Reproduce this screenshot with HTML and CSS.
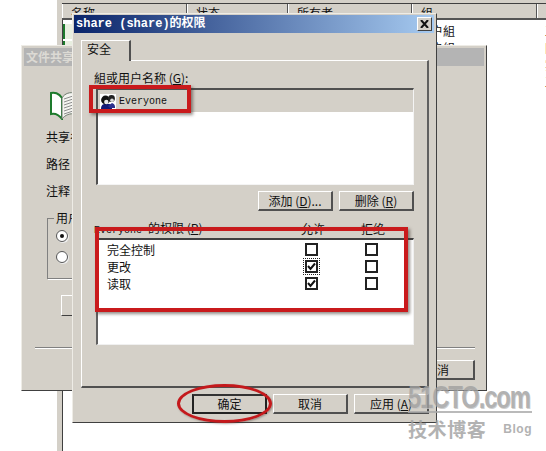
FILE: index.html
```html
<!DOCTYPE html>
<html lang="zh">
<head>
<meta charset="utf-8">
<title>share (share)的权限</title>
<link rel="stylesheet" href="styles.css">
</head>
<body>
<div class="desktop">

  <div class="list-window">
    <div class="list-head">
      <div class="col c1">名称</div><div class="col c2">状态</div><div class="col c3">所有者</div><div class="col c4">组</div><div class="col c5">描述</div>
    </div>
    <div class="list-row"><div class="c1 row-icon"></div><div class="c2"></div><div class="c3"></div><div class="c4 cell">用户組</div><div class="c5 cell">工作</div></div>
    <div class="list-row"><div class="c1 row-icon"></div><div class="c2"></div><div class="c3"></div><div class="c4 cell">用户組</div><div class="c5 cell">同步</div></div>
    <div class="list-row"><div class="c1"></div><div class="c2"></div><div class="c3"></div><div class="c4"></div><div class="c5 cell">实现</div></div>
    <div class="list-row"><div class="c1"></div><div class="c2"></div><div class="c3"></div><div class="c4"></div><div class="c5 cell">工具</div></div>
  </div>

  <div class="window back">
    <div class="back-title">文件共享</div>
    <div class="back-body">
      <svg class="book" viewBox="0 0 27 30" width="27" height="30">
        <path d="M13 8C10 3 5 2 2 3V24C6 23 10 25 13 29Z" fill="#fff" stroke="#1d7a2c" stroke-width="2"/>
        <path d="M13 8C16 3 21 2 26 3V24C21 23 16 25 13 29Z" fill="#f4f4f0" stroke="#6d7a6d" stroke-width="1"/>
        <path d="M15 9L24 6M15 12L24 9M15 15L24 12M15 18L24 15M15 21L24 18M15 24L24 21" stroke="#8d8d8d" stroke-width="1"/>
      </svg>
      <div class="back-label l1">共享名</div>
      <div class="back-label">路径</div>
      <div class="back-label">注释</div>
      <div class="group">
        <span class="legend">用户</span>
        <div class="radio on"></div>
        <div class="radio"></div>
      </div>
      <div class="back-btn-small"></div>
      <div class="back-sep"></div>
      <div class="back-foot"><div class="btn">取消</div></div>
    </div>
  </div>

  <div class="window dialog">
    <div class="titlebar">
      <span class="title-text">share (share)的权限</span>
      <div class="close"><svg viewBox="0 0 9 8" width="9" height="8"><path d="M1 0L8 8M8 0L1 8" stroke="#111" stroke-width="2"/></svg></div>
    </div>
    <div class="tab">安全</div>
    <div class="pane">
      <div class="label">組或用户名称 (<u>G</u>):</div>
      <div class="userlist">
        <div class="user-row">
          <svg class="people" viewBox="0 0 16 16" width="16" height="16">
            <rect width="16" height="16" fill="#fff"/>
            <path d="M1 15C1 11 3 10 5 10H9C11 10 12 12 12 15Z" fill="#141a78"/>
            <path d="M8 12L12 9C15 10 15 12 15 14H10Z" fill="#2b2f8c"/>
            <circle cx="5.5" cy="6" r="4.4" fill="#111"/>
            <circle cx="6.3" cy="8" r="2.2" fill="#e9e9e9"/>
            <circle cx="11.5" cy="4.5" r="3.4" fill="#222"/>
            <circle cx="12" cy="6.3" r="1.8" fill="#ddd"/>
          </svg>
          <span class="mono">Everyone</span>
        </div>
      </div>
      <div class="btn-row">
        <div class="btn">添加 (<u>D</u>)...</div>
        <div class="btn">删除 (<u>R</u>)</div>
      </div>
      <div class="perm-head">
        <span class="perm-title"><span class="mono perm-who">Everyone</span>的权限 (<u>P</u>)</span>
        <span class="perm-col">允许</span>
        <span class="perm-col">拒绝</span>
      </div>
      <div class="permlist">
        <div class="perm-row">
          <span class="perm-name">完全控制</span>
          <span class="check-cell"><span class="check"></span></span>
          <span class="check-cell"><span class="check"></span></span>
        </div>
        <div class="perm-row">
          <span class="perm-name">更改</span>
          <span class="check-cell"><span class="check focus"><svg viewBox="0 0 9 9" width="9" height="9"><path d="M1 4L3.5 7L8 1.5" fill="none" stroke="#111" stroke-width="2"/></svg></span></span>
          <span class="check-cell"><span class="check"></span></span>
        </div>
        <div class="perm-row">
          <span class="perm-name">读取</span>
          <span class="check-cell"><span class="check"><svg viewBox="0 0 9 9" width="9" height="9"><path d="M1 4L3.5 7L8 1.5" fill="none" stroke="#111" stroke-width="2"/></svg></span></span>
          <span class="check-cell"><span class="check"></span></span>
        </div>
      </div>
    </div>
    <div class="foot">
      <div class="btn default">确定</div>
      <div class="btn">取消</div>
      <div class="btn">应用 (<u>A</u>)</div>
    </div>
  </div>

  <div class="mark mark-user"></div>
  <div class="mark mark-perm"></div>
  <div class="mark mark-ok"></div>

  <div class="watermark">
    <div class="wm-logo">51CTO.com</div>
    <div class="wm-line"></div>
    <div class="wm-sub"><span class="wm-cn">技术博客</span><span class="wm-blog">Blog</span></div>
  </div>
</div>
</body>
</html>
```
FILE: styles.css
```css
* { box-sizing: border-box; }
html, body { margin: 0; padding: 0; background: #fff; }
body { font-family: "Noto Sans CJK SC", "Liberation Sans", sans-serif; font-size: 12px; line-height: 14px; color: #111; }
u { text-decoration: underline; }
.mono { font-family: "Liberation Mono", "DejaVu Sans Mono", monospace; font-size: 10px; }

.desktop { position: relative; width: 546px; height: 451px; overflow: hidden; background: #fff; }

/* background list window */
.list-window { position: absolute; left: 57px; top: 0; right: 0; bottom: 0; border-left: 5px solid #d4d0c8; box-shadow: inset 1px 0 0 #404040; background: #fff; padding-top: 3px; overflow: hidden; }
.list-head { display: flex; height: 17px; background: #d4d0c8; border-top: 1px solid #404040; border-bottom: 2px solid #555; box-shadow: 0 -3px 0 #d4d0c8; }
.col { padding-left: 9px; padding-top: 2px; border-right: 1px solid #555; box-shadow: inset 1px 0 0 #fff; white-space: nowrap; }
.c1 { width: 125px; flex: none; }
.c2 { width: 101px; flex: none; }
.c3 { width: 124px; flex: none; }
.c4 { width: 125px; flex: none; }
.c5 { width: 125px; flex: none; }
.list-row { display: flex; height: 17px; padding-top: 4px; }
.cell { padding-left: 7px; white-space: nowrap; }
.c5.cell { padding-left: 8px; }
.row-icon { position: relative; }
.row-icon::before { content: ""; display: block; margin-left: 1px; width: 10px; height: 15px; border-left: 2px solid #1d7a2c; background: #e8efe0; }

/* windows */
.window { position: absolute; background: #d4d0c8; border: 1px solid #eeece6; border-right-color: #404040; border-bottom-color: #404040; }

.back { left: 21px; top: 45px; width: 466px; height: 346px; padding: 2px; }
.back-title { height: 18px; background: #b4b4b4; color: #dcdad4; font-weight: 700; padding: 2px 0 0 2px; }
.back-body { padding-left: 22px; }
.book { display: block; margin: 24px 0 0 3px; }
.back-label { height: 27px; padding-top: 0; white-space: nowrap; }
.back-label.l1 { margin-top: 10px; }
.group { position: relative; width: 380px; height: 61px; margin: 7px 0 0 1px; border: 1px solid #808080; box-shadow: 1px 1px 0 #fff; padding: 11px 0 0 8px; display: flex; flex-direction: column; gap: 9px; }
.legend { position: absolute; left: 6px; top: -8px; background: #d4d0c8; padding: 0 2px; }
.radio { width: 12px; height: 12px; flex: none; border-radius: 50%; background: #fff; border: 1px solid #555; box-shadow: 1px 1px 0 #eee; position: relative; }
.radio.on::after { content: ""; position: absolute; left: 3px; top: 3px; width: 4px; height: 4px; border-radius: 50%; background: #111; }
.back-btn-small { width: 75px; height: 21px; margin: 16px 0 0 15px; border: 1px solid #fff; border-right-color: #404040; border-bottom-color: #404040; }
.back-sep { height: 2px; width: 440px; margin: 31px 0 0 -11px; border-top: 1px solid #808080; border-bottom: 1px solid #fff; }
.back-foot { display: flex; justify-content: flex-end; width: 429px; margin-top: 11px; }

/* main dialog */
.dialog { left: 72px; top: 13px; width: 365px; height: 410px; padding: 1px; }
.titlebar { display: flex; align-items: center; justify-content: space-between; height: 18px; margin-right: 1px; padding: 0 2px; background: linear-gradient(90deg, #0a246a, #a6caf0); color: #fff; font-weight: 700; }
.title-text { font-family: "Liberation Mono", "Noto Sans CJK SC", monospace; font-size: 12px; white-space: pre; }
.close { display: flex; align-items: center; justify-content: center; width: 15px; height: 14px; background: #d4d0c8; border: 1px solid #fff; border-right-color: #404040; border-bottom-color: #404040; }
.tab { width: 50px; height: 21px; margin: 7px 0 -1px 7px; padding: 1px 0 0 5px; position: relative; z-index: 1; background: #d4d0c8; border: 1px solid #fff; border-bottom: 0; border-right: 2px solid #505050; }
.pane { width: 348px; height: 328px; margin-left: 7px; padding: 10px 14px 0 14px; border: 1px solid #fff; border-right: 2px solid #606060; border-bottom: 2px solid #505050; }
.label { height: 17px; margin-left: -2px; white-space: nowrap; }
.userlist { width: 318px; height: 97px; background: #fff; border: 1px solid #f4f4f4; border-top: 2px solid #505050; border-left: 2px solid #505050; }
.user-row { display: flex; align-items: center; gap: 3px; height: 22px; padding: 1px 0 0 2px; background: #d4d0c8; }
.btn-row { display: flex; justify-content: flex-end; gap: 6px; width: 318px; margin-top: 6px; }
.btn { display: flex; align-items: center; justify-content: center; flex: none; width: 75px; height: 20px; background: #d4d0c8; border: 1px solid #fff; border-right: 2px solid #505050; border-bottom: 2px solid #505050; white-space: nowrap; }
.btn.default { border: 2px solid #222; border-top-color: #333; }
.perm-head { display: flex; align-items: center; width: 318px; height: 14px; margin-top: 11px; }
.perm-title { width: 185px; flex: none; margin-left: -2px; white-space: nowrap; }
.perm-who { margin-right: 6px; }
.perm-col { width: 60px; flex: none; text-align: center; padding-left: 8px; }
.permlist { width: 318px; height: 107px; margin-top: 2px; padding-top: 1px; background: #fff; border: 1px solid #f0f0f0; border-top: 2px solid #404040; border-left: 2px solid #606060; }
.perm-row { display: flex; align-items: center; height: 17px; }
.perm-name { width: 198px; flex: none; margin-left: 9px; }
.check-cell { display: flex; justify-content: center; flex: none; width: 13px; margin-right: 47px; }
.check { display: flex; align-items: center; justify-content: center; width: 13px; height: 13px; background: #fff; border: 2px solid #222; }
.check.focus { outline: 1px dotted #222; outline-offset: 1px; }
.foot { display: flex; gap: 6px; justify-content: flex-end; margin: 6px 6px 0 0; }

/* red annotations */
.mark { position: absolute; box-shadow: 2px 2px 3px rgba(60, 50, 40, .55); }
.mark-user { left: 89px; top: 85px; width: 102px; height: 28px; border: 4px solid #c91a1c; }
.mark-perm { left: 95px; top: 227px; width: 313px; height: 85px; border: 4px solid #c91a1c; }
.mark-ok { left: 177px; top: 384px; width: 95px; height: 39px; border: 3px solid #c4191c; border-radius: 50%; box-shadow: 1px 1px 2px rgba(60, 50, 40, .4); }

/* watermark */
.watermark { position: absolute; left: 408px; top: 384px; width: 124px; color: #a0a0a0; opacity: .8; }
.wm-logo { font-family: "Liberation Sans", sans-serif; font-weight: 700; font-size: 31px; line-height: 27px; letter-spacing: -1.5px; transform: scaleX(.77); transform-origin: 0 50%; white-space: nowrap; text-shadow: 1px 1px 0 #c4c4c4; }
.wm-line { height: 2px; margin-top: 0; background: #aaa; }
.wm-sub { display: flex; align-items: center; justify-content: space-between; margin-top: 5px; }
.wm-cn { font-size: 19px; line-height: 22px; font-weight: 700; letter-spacing: 0.6px; white-space: nowrap; }
.wm-blog { font-family: "Liberation Sans", sans-serif; font-size: 12px; font-weight: 700; letter-spacing: .5px; }
```
